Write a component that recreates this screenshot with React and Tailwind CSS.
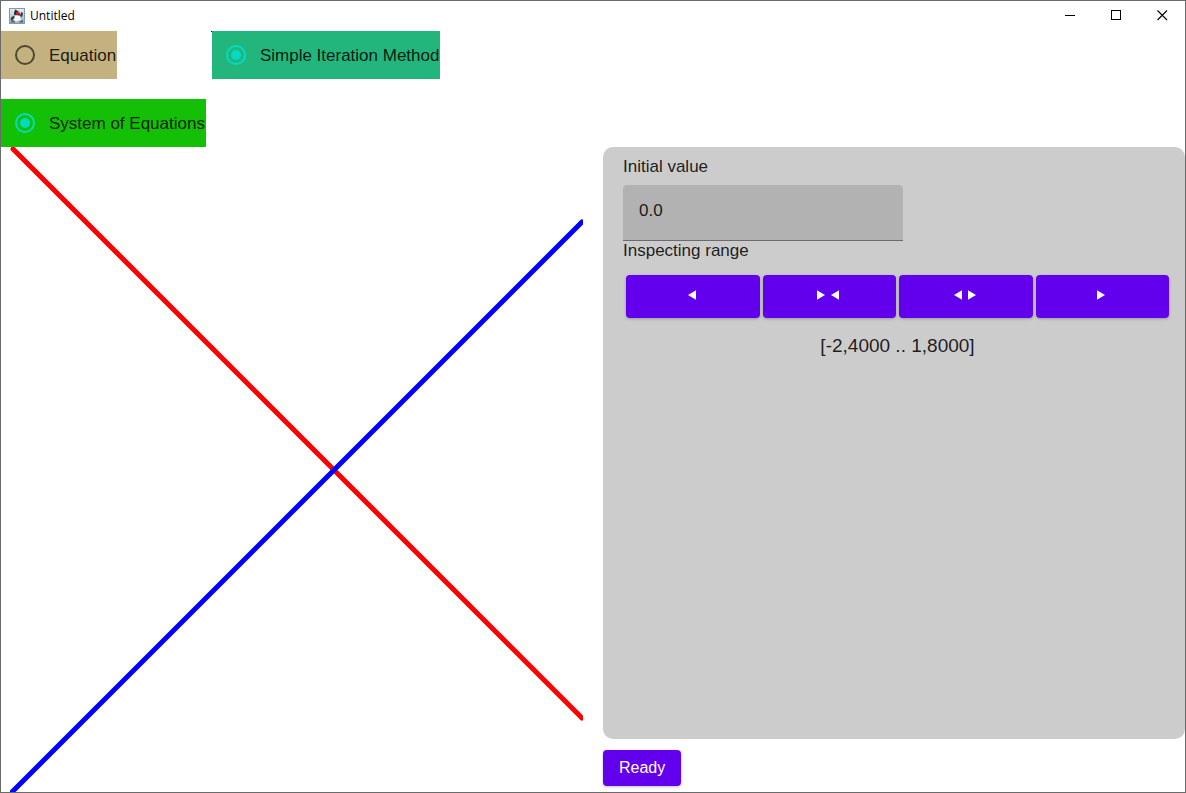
import { useState } from 'react';

function RadioTile({ name, label, checked, onChange, tone }) {
  return (
    <label className={`flex h-12 items-center gap-[14px] whitespace-nowrap pl-[14px] pr-px ${tone}`}>
      <input
        type="radio"
        name={name}
        checked={checked}
        onChange={onChange}
        className="grid size-5 shrink-0 appearance-none place-content-center rounded-full border-2 border-black/60 checked:border-[#03dac5] checked:before:size-[10px] checked:before:rounded-full checked:before:bg-[#03dac5] checked:before:content-['']"
      />
      <span className="pt-[2px]">{label}</span>
    </label>
  );
}

function Arrow({ dir }) {
  return (
    <svg viewBox="0 0 8 10" className="h-[10px] w-2" fill="currentColor" aria-hidden="true">
      <path d={dir === 'left' ? 'M8 0.3V9.7L0 5Z' : 'M0 0.3V9.7L8 5Z'} />
    </svg>
  );
}

function RangeButton({ label, dirs, onClick }) {
  return (
    <button
      type="button"
      aria-label={label}
      onClick={onClick}
      className="flex h-[43px] flex-1 items-center justify-center gap-[6px] rounded-[4px] bg-[#6200ee] pb-[3px] pr-[2px] text-white shadow-[0_1px_3px_rgba(0,0,0,0.25)]"
    >
      {dirs.map((d, i) => (
        <Arrow key={i} dir={d} />
      ))}
    </button>
  );
}

function DukeIcon() {
  return (
    <svg viewBox="0 0 16 16" className="size-4" aria-hidden="true">
      <defs>
        <linearGradient id="duke-bg" x1="0" y1="0" x2="0" y2="1">
          <stop offset="0" stopColor="#e4edf4" />
          <stop offset="1" stopColor="#8fb0cc" />
        </linearGradient>
      </defs>
      <rect x="0.5" y="0.5" width="15" height="15" fill="url(#duke-bg)" stroke="#8499ab" />
      <path d="M6 1.5L9 3L11 6L10.5 8L8 7.5L5.5 8L5 5Z" fill="#2b2b2b" />
      <path d="M5 7.5C7 7 9.5 7 11 8L12 13L9.5 12.5L7.5 13.5L4 13Z" fill="#f8f8f8" />
      <path d="M5.5 7.5L2.5 9L1.5 12L3.5 12L5.5 10Z" fill="#3a3a3a" />
      <path d="M11 7L12.5 4L14 5L13.5 8L12 9.5Z" fill="#3a3a3a" />
      <path d="M2 12.5L5 12L6.5 14.5H2ZM10.5 13L14 12V14.5H10.5Z" fill="#5d666e" />
      <circle cx="8.8" cy="5.3" r="1.7" fill="#e0202c" />
    </svg>
  );
}

function TitleBar() {
  return (
    <header className="flex h-[30px] shrink-0 items-center justify-between pl-2">
      <div className="flex items-center gap-[5px] pb-px">
        <DukeIcon />
        <h1 className="font-['Open_Sans',sans-serif] text-[12px] leading-4 text-black">Untitled</h1>
      </div>
      <div className="flex h-full">
        <button type="button" aria-label="Minimize" className="grid w-[46px] place-content-center pb-[1px]">
          <svg viewBox="0 0 11 11" className="size-[11px]" shapeRendering="crispEdges">
            <path d="M0 5.5H10" stroke="#000" />
          </svg>
        </button>
        <button type="button" aria-label="Maximize" className="grid w-[46px] place-content-center pb-[1px]">
          <svg viewBox="0 0 11 11" className="size-[11px]" shapeRendering="crispEdges">
            <rect x="0.5" y="0.5" width="9" height="9" fill="none" stroke="#000" />
          </svg>
        </button>
        <button type="button" aria-label="Close" className="grid w-[46px] place-content-center pb-[1px]">
          <svg viewBox="0 0 11 11" className="size-[11px]">
            <path d="M0.5 0.5L10 10M10 0.5L0.5 10" stroke="#000" strokeWidth="1.1" />
          </svg>
        </button>
      </div>
    </header>
  );
}

function Plot() {
  return (
    <svg
      viewBox="-1 0 573 645"
      preserveAspectRatio="none"
      className="h-0 min-h-full w-full"
      role="img"
      aria-label="Plot of the two equations"
    >
      <g fill="none" strokeWidth="5" strokeLinecap="round">
        <path d="M2 2L571 571" stroke="#ff0000" />
        <path d="M0 646L571 75" stroke="#0000ff" />
      </g>
    </svg>
  );
}

const format = (n) => n.toFixed(4).replace('.', ',');

export default function App() {
  const [kind, setKind] = useState('system');
  const [initial, setInitial] = useState('0.0');
  const [range, setRange] = useState([-2.4, 1.8]);
  const move = (a, b) => setRange(([lo, hi]) => [lo + a, hi + b]);

  return (
    <div className="flex min-h-screen flex-col border border-[#6b6b6b] bg-white font-['Liberation_Sans',Arial,sans-serif] text-[17px] leading-5 text-black/87">
      <TitleBar />
      <div className="flex items-start">
        <div className="flex flex-col items-start gap-5">
          <RadioTile
            name="kind"
            label="Equation"
            tone="bg-[#c3b280]"
            checked={kind === 'equation'}
            onChange={() => setKind('equation')}
          />
          <RadioTile
            name="kind"
            label="System of Equations"
            tone="bg-[#14c005]"
            checked={kind === 'system'}
            onChange={() => setKind('system')}
          />
        </div>
        <div className="ml-[5px] flex items-start">
          <span className="size-px bg-black" />
          <RadioTile name="method" label="Simple Iteration Method" tone="bg-[#23b67c]" checked onChange={() => {}} />
        </div>
      </div>
      <main className="grid flex-1 grid-cols-2">
        <div className="pl-[9px] pr-[10px]">
          <Plot />
        </div>
        <div className="flex flex-col items-start pb-[6px] pl-[10px]">
          <section className="flex w-full flex-1 flex-col rounded-[10px] bg-[#cccccc] pb-5 pl-5 pr-4 pt-[10px]">
            <label htmlFor="initial">Initial value</label>
            <input
              id="initial"
              type="text"
              value={initial}
              onChange={(e) => setInitial(e.target.value)}
              className="mt-2 h-14 w-[280px] max-w-full rounded-t-[4px] border-b border-[#6b6b6b] bg-[#b2b2b2] px-4 pb-1 outline-none"
            />
            <h2>Inspecting range</h2>
            <div className="mt-[14px] flex gap-[3px] pl-[3px]">
              <RangeButton label="Shift left" dirs={['left']} onClick={() => move(-0.1, -0.1)} />
              <RangeButton label="Narrow" dirs={['right', 'left']} onClick={() => move(0.1, -0.1)} />
              <RangeButton label="Widen" dirs={['left', 'right']} onClick={() => move(-0.1, 0.1)} />
              <RangeButton label="Shift right" dirs={['right']} onClick={() => move(0.1, 0.1)} />
            </div>
            <output className="mt-4 pl-[3px] text-center text-[19px] leading-6">
              [{format(range[0])} .. {format(range[1])}]
            </output>
          </section>
          <button
            type="button"
            className="mt-[11px] h-9 rounded-[4px] bg-[#6200ee] px-4 text-[16px] text-white shadow-[0_1px_3px_rgba(0,0,0,0.25)]"
          >
            Ready
          </button>
        </div>
      </main>
    </div>
  );
}
